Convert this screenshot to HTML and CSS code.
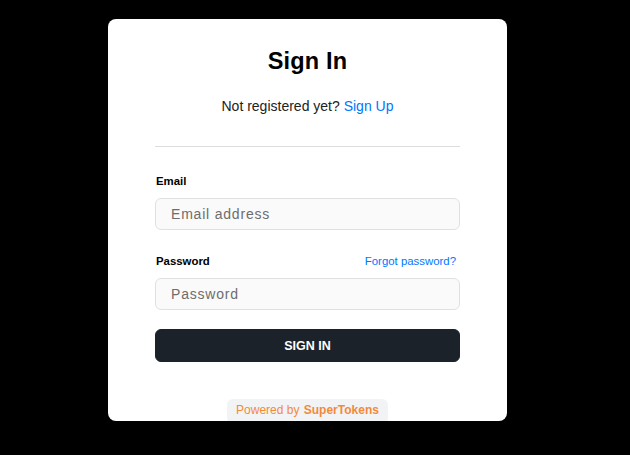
FILE: index.html
```html
<!DOCTYPE html>
<html lang="en">
<head>
<meta charset="utf-8">
<title>Sign In</title>
<link rel="stylesheet" href="styles.css">
</head>
<body>
<div class="page">
  <div class="card">
    <h1 class="title">Sign In</h1>
    <p class="subtitle">Not registered yet? <a class="link" href="#">Sign Up</a></p>
    <div class="divider"></div>
    <form class="form">
      <div class="field">
        <div class="label-row"><label class="label">Email</label></div>
        <input class="input" type="email" placeholder="Email address">
      </div>
      <div class="field">
        <div class="label-row"><label class="label">Password</label><a class="forgot" href="#">Forgot password?</a></div>
        <input class="input" type="password" placeholder="Password">
      </div>
      <button class="button" type="button">SIGN IN</button>
    </form>
    <div class="branding">Powered by <b>SuperTokens</b></div>
  </div>
</div>
</body>
</html>
```
FILE: styles.css
```css
html, body {
  margin: 0;
  padding: 0;
  background: #000;
  height: 100%;
}
body {
  font-family: "Liberation Sans", Arial, sans-serif;
}
.page {
  width: 615px;
  padding-top: 19px;
}
.card {
  width: 399px;
  height: 402px;
  margin: 0 auto;
  background: #fff;
  border-radius: 8px;
  overflow: hidden;
  box-sizing: border-box;
  padding: 28px 47px 0 47px;
  display: flex;
  flex-direction: column;
  align-items: stretch;
}
.card > * {
  flex-shrink: 0;
}
.title {
  margin: 0;
  font-size: 23.5px;
  line-height: 28px;
  font-weight: 700;
  letter-spacing: 0.2px;
  text-align: center;
  color: #000;
}
.subtitle {
  margin: 21px 0 0 0;
  font-size: 14px;
  line-height: 20px;
  text-align: center;
  color: #222;
}
.link {
  color: #0076ff;
  text-decoration: none;
}
.divider {
  margin-top: 30px;
  height: 1px;
  background: #dddddd;
}
.form {
  margin-top: 26px;
  display: flex;
  flex-direction: column;
}
.field {
  display: flex;
  flex-direction: column;
  gap: 9px;
  margin-bottom: 23px;
}
.field + .field {
  margin-bottom: 19px;
}
.label-row {
  display: flex;
  justify-content: space-between;
  align-items: baseline;
  height: 16px;
}
.label {
  font-size: 11.4px;
  line-height: 16px;
  font-weight: 700;
  color: #000;
  padding-left: 1px;
}
.forgot {
  font-size: 11.4px;
  line-height: 16px;
  color: #0076ff;
  text-decoration: none;
  padding-right: 4px;
}
.input {
  box-sizing: border-box;
  height: 32px;
  width: 100%;
  margin: 0;
  padding: 0 15px;
  background: #fafafa;
  border: 1px solid #e0e0e0;
  border-radius: 6px;
  font-family: "Liberation Sans", Arial, sans-serif;
  font-size: 14px;
  letter-spacing: 0.8px;
  color: #222;
  outline: none;
}
.input::placeholder {
  color: #6d6d6d;
}
.button {
  box-sizing: border-box;
  height: 33px;
  width: 100%;
  margin: 0;
  background: #1c222a;
  border: 1px solid #1c222a;
  border-radius: 6px;
  color: #fff;
  font-family: "Liberation Sans", Arial, sans-serif;
  font-size: 12.5px;
  font-weight: 700;
  cursor: pointer;
}
.branding {
  margin: 37px auto 0 auto;
  padding: 3px 9px 6px 9px;
  background: #f2f3f5;
  border-radius: 6px;
  font-size: 12px;
  line-height: 16px;
  color: #f38a3a;
}
.branding b {
  margin-left: 1px;
}
```
